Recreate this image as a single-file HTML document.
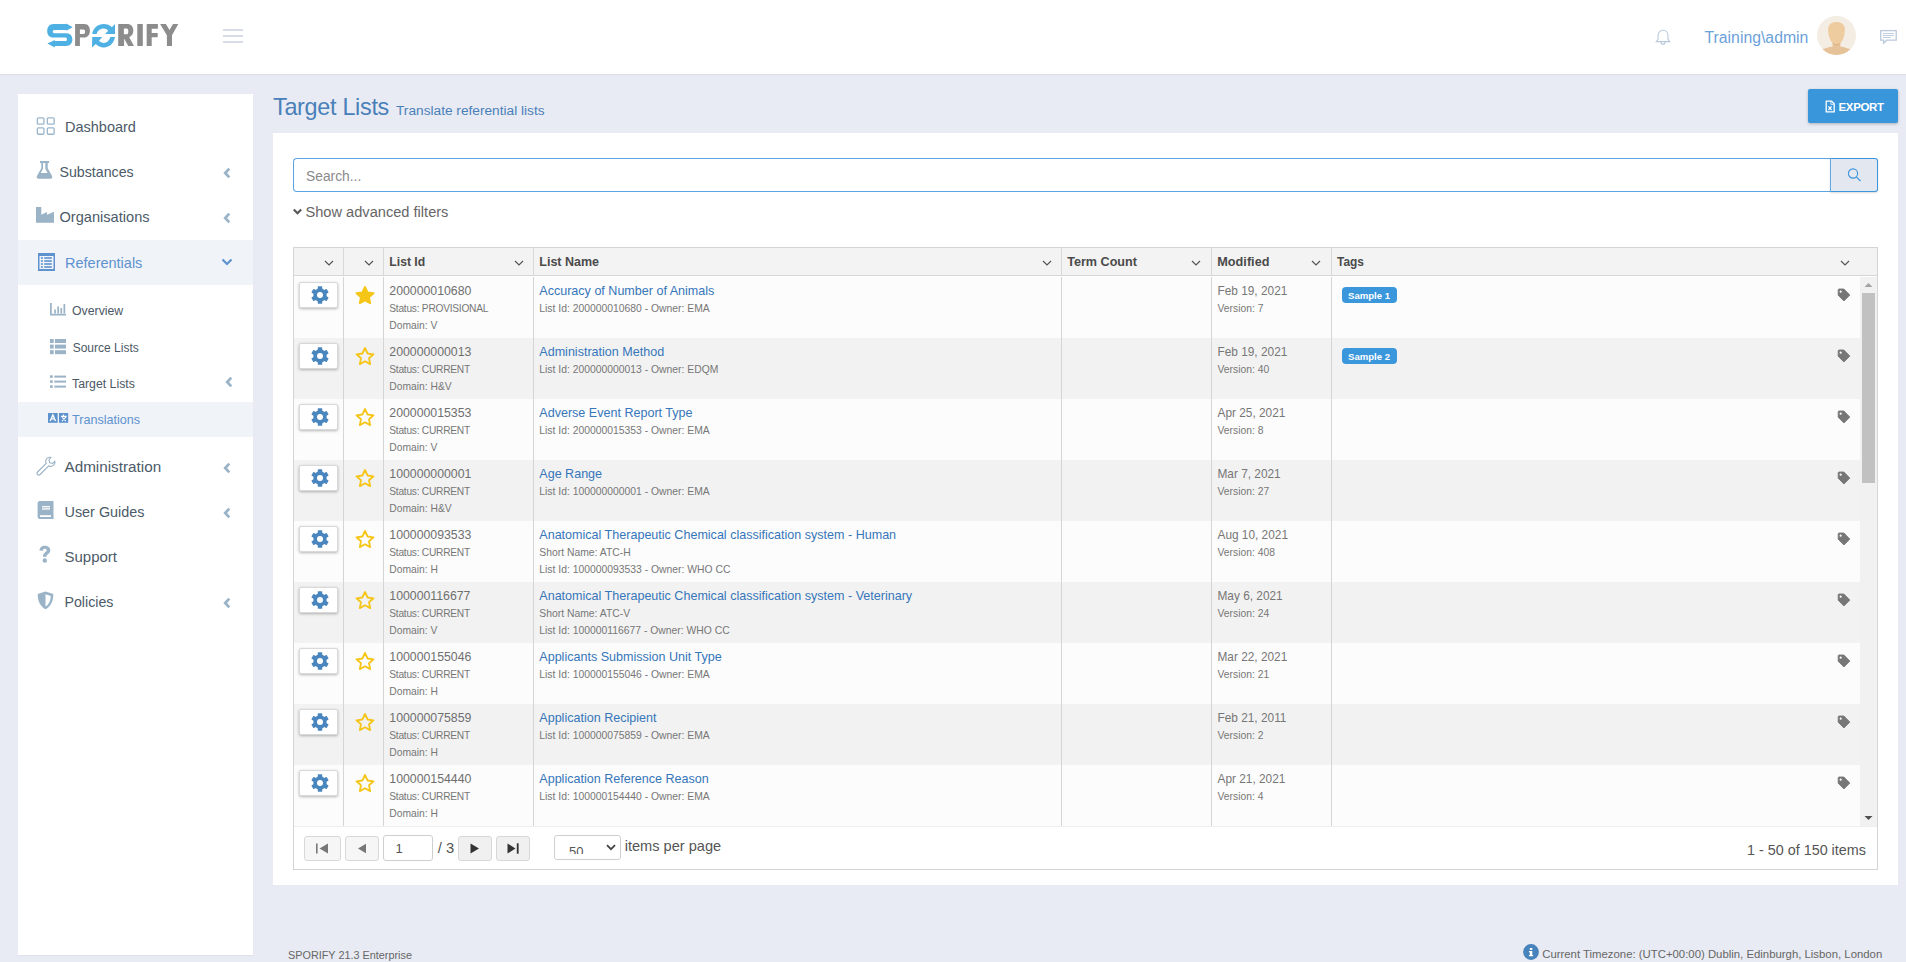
<!DOCTYPE html>
<html><head><meta charset="utf-8"><title>Target Lists</title>
<style>
html,body{margin:0;padding:0;}
body{width:1906px;height:962px;overflow:hidden;position:relative;background:#e8ebf3;font-family:"Liberation Sans", sans-serif;}
.t{position:absolute;line-height:1.117;white-space:nowrap;}
.r{position:absolute;}
</style></head><body>
<div class="r" style="left:0px;top:0px;width:1906px;height:74px;background:#fff;box-shadow:0 1px 1px rgba(0,0,0,0.05)"></div>
<svg class="r" style="left:0px;top:0px;" width="200" height="74" viewBox="0 0 200 74">
<g fill="#4fb0e3">
 <path d="M72.7,27.2 L66.3,30.8 L66.3,30 L54.3,30 C53.3,30 52.8,30.8 52.8,31.6 C52.8,32.5 53.3,33.2 54.5,33.2 L66,33.2 C70.3,33.2 72.4,35.8 72.4,39.5 C72.4,43.3 70,45.9 66,45.9 L54.8,45.9 L54.8,47.5 L47.4,43.5 L54.8,39.9 L54.8,41.1 L65.8,41.1 C66.6,41.1 66.9,40.4 66.9,39.3 C66.9,38.2 66.5,37.5 65.7,37.5 L53.2,37.5 C49.3,37.5 47.2,35 47.2,31 C47.2,26.8 49.5,24 53.6,24 L66.3,24 L66.3,23.6 Z"/>
 <path d="M92.2,33.9 C93.2,28 97.8,24 103.8,24 C107,24 109.8,25.2 111.8,27.2 L115,24 L115,33.9 L105,33.9 L108.2,30.8 C107,29.3 105.5,28.6 103.8,28.6 C100.3,28.6 97.6,30.8 96.6,33.9 Z"/>
 <path d="M115,37.1 C114,43 109.6,47.5 103.8,47.5 C100.6,47.5 97.8,46.2 95.8,44 L92,47.5 L92.2,37.1 L102.2,37.1 L99,40.7 C100.3,42.1 102,42.9 103.8,42.9 C107,42.9 109.4,40.6 110.2,37.1 Z"/>
</g>
<g fill="#8c8c8c" fill-rule="evenodd">
 <path d="M75.1,24 H84.5 C88,24 89.9,26.8 89.9,30.7 C89.9,35 87.5,37.5 84,37.5 H79.9 V46 H75.1 Z M79.9,29.6 V34 H83.4 C84.5,34 85.1,33.2 85.1,31.8 C85.1,30.4 84.5,29.6 83.4,29.6 Z"/>
 <path d="M118.2,24 H127 C131,24 133.3,26.5 133.3,30.8 C133.3,33.8 131.8,36 129.2,37.2 L134,46 H128.2 L124.1,38.6 V46 H118.2 Z M123.9,28.6 V34.2 H126.7 C127.8,34.2 128.3,33.3 128.3,31.4 C128.3,29.5 127.8,28.6 126.7,28.6 Z"/>
 <rect x="137.3" y="24" width="5.5" height="22"/>
 <path d="M146.7,24 H157.9 V28.8 H151.7 V33.1 H157.7 V37.3 H151.7 V46 H146.7 Z"/>
 <path d="M160.1,24 H165.9 L169.5,30.1 L173,24 H178.3 L172,35.3 V46 H166.9 V35.3 Z"/>
</g></svg>
<div class="r" style="left:223px;top:29px;width:20px;height:2px;background:#d6dde8"></div>
<div class="r" style="left:223px;top:35px;width:20px;height:2px;background:#d6dde8"></div>
<div class="r" style="left:223px;top:41px;width:20px;height:2px;background:#d6dde8"></div>
<svg class="r" style="left:1654px;top:28px;" width="18" height="18" viewBox="0 0 18 18"><path d="M9,2.2 C6,2.2 4,4.6 4,7.6 L4,11.5 L2.2,13.6 L15.8,13.6 L14,11.5 L14,7.6 C14,4.6 12,2.2 9,2.2 Z M7,14 C7,15.4 8,16.3 9,16.3 C10,16.3 11,15.4 11,14" fill="none" stroke="#b9c9dc" stroke-width="1.1"/></svg>
<div class="t " style="left:1704.50px;top:29px;line-height:17px;font-size:15.8px;color:#6ca2d9;font-weight:400;">Training\admin</div>
<svg class="r" style="left:1817px;top:16px;" width="40" height="40" viewBox="0 0 40 40"><defs><clipPath id="cc"><circle cx="19.5" cy="19.5" r="19.5"/></clipPath></defs>
<circle cx="19.5" cy="19.5" r="19.5" fill="#f4ede3"/>
<g clip-path="url(#cc)"><path d="M0,35.5 C5,33 11,31.6 15.6,30.6 V25 H23.4 V30.6 C28,31.6 34,33 39,35.5 V40 H0 Z" fill="#e5c297"/>
<path d="M19.5,6 C24.6,6 27.9,8.6 27.9,13.6 C27.9,19.2 26.1,24.4 23.6,26.9 C22.1,28.3 16.9,28.3 15.4,26.9 C12.9,24.4 11.1,19.2 11.1,13.6 C11.1,8.6 14.4,6 19.5,6 Z" fill="#efcc9f"/>
<path d="M15.9,27.6 C17.6,29 21.4,29 23.1,27.6" fill="none" stroke="#d8b182" stroke-width="0.9"/></g></svg>
<svg class="r" style="left:1879px;top:29px;" width="19" height="16" viewBox="0 0 19 16"><path d="M1.7,1.7 H17.2 V11.2 H7.7 L4.6,14.3 V11.2 H1.7 Z" fill="none" stroke="#b9c9dc" stroke-width="1.3"/><path d="M4,4.5 H15 M4,6.5 H15 M4,8.5 H12" stroke="#b9c9dc" stroke-width="0.9"/></svg>
<div class="r" style="left:18px;top:94px;width:235px;height:861px;background:#fff;box-shadow:0 1px 1px rgba(0,0,0,0.03)"></div>
<svg class="r" style="left:36px;top:117px;" width="20" height="19" viewBox="0 0 20 19"><g fill="none" stroke="#9ab6cc" stroke-width="1.3"><rect x="1.35" y="0.85" width="6.6" height="6.3" rx="1"/><rect x="11.35" y="0.85" width="6.8" height="6.3" rx="1"/><rect x="1.35" y="10.85" width="6.6" height="6.4" rx="1"/><rect x="11.35" y="10.85" width="6.8" height="6.4" rx="1"/></g></svg>
<div class="t " style="left:65.00px;top:119px;line-height:16px;font-size:14.5px;color:#4c5a68;font-weight:400;">Dashboard</div>
<svg class="r" style="left:36px;top:161px;" width="17" height="18" viewBox="0 0 17 18"><rect x="4" y="0" width="9" height="2" fill="#9ab3c7"/><path d="M5.3,1.5 H11.7 V7.3 L16.1,15 C16.7,16.3 16,17.7 14.5,17.7 H2.5 C1,17.7 0.3,16.3 0.9,15 L5.3,7.3 Z" fill="#9ab3c7"/><path d="M7,2 H9.3 V7.8 L11.6,11.9 H4.7 L7,7.8 Z" fill="#fff"/></svg>
<div class="t " style="left:59.50px;top:164px;line-height:16px;font-size:14.2px;color:#4c5a68;font-weight:400;">Substances</div>
<svg class="r" style="left:35.5px;top:207px;" width="19" height="17" viewBox="0 0 19 17"><path d="M0,0 H5.3 V7.7 L11,5.1 V7.7 L17.5,5.1 H18 V15.7 H0 Z" fill="#9ab3c7"/></svg>
<div class="t " style="left:59.50px;top:209px;line-height:16px;font-size:14.6px;color:#4c5a68;font-weight:400;">Organisations</div>
<div class="r" style="left:18px;top:240px;width:235px;height:45px;background:#f0f3f8"></div>
<svg class="r" style="left:37.8px;top:253px;" width="17" height="18" viewBox="0 0 17 18"><path fill-rule="evenodd" d="M0,0 H17 V18 H0 Z M1.5,2.9 V16 H15.5 V2.9 Z" fill="#5e92cf"/><g fill="#5e92cf"><rect x="2.9" y="4.2" width="2" height="1.6"/><rect x="6.2" y="4.2" width="7.6" height="1.6"/><rect x="2.9" y="7.2" width="2" height="1.6"/><rect x="6.2" y="7.2" width="7.6" height="1.6"/><rect x="2.9" y="10.2" width="2" height="1.6"/><rect x="6.2" y="10.2" width="7.6" height="1.6"/><rect x="2.9" y="13.2" width="2" height="1.6"/><rect x="6.2" y="13.2" width="7.6" height="1.6"/></g></svg>
<div class="t " style="left:65.00px;top:255px;line-height:16px;font-size:14.5px;color:#5e92cf;font-weight:400;">Referentials</div>
<svg class="r" style="left:50px;top:302.5px;" width="17" height="13" viewBox="0 0 17 13"><path d="M0.9,0 V11.6 H16" fill="none" stroke="#9ab3c7" stroke-width="1.7"/><g fill="#9ab3c7"><rect x="4.2" y="6.5" width="1.7" height="4"/><rect x="7.3" y="3.5" width="1.7" height="7"/><rect x="10.4" y="5" width="1.7" height="5.5"/><rect x="13.5" y="1" width="1.7" height="9.5"/></g></svg>
<div class="t " style="left:72.00px;top:304px;line-height:14px;font-size:12.3px;color:#4c5866;font-weight:400;">Overview</div>
<svg class="r" style="left:50px;top:338.6px;" width="16" height="16" viewBox="0 0 16 16"><g fill="#9ab3c7"><rect x="0" y="0" width="3.7" height="4"/><rect x="5" y="0" width="11" height="4"/><rect x="0" y="5.6" width="3.7" height="4"/><rect x="5" y="5.6" width="11" height="4"/><rect x="0" y="11.2" width="3.7" height="4"/><rect x="5" y="11.2" width="11" height="4"/></g></svg>
<div class="t " style="left:72.70px;top:341px;line-height:14px;font-size:12.0px;color:#4c5866;font-weight:400;">Source Lists</div>
<svg class="r" style="left:50px;top:375.2px;" width="16" height="14" viewBox="0 0 16 14"><g fill="#9ab3c7"><rect x="0" y="0.3" width="2.7" height="2.6"/><rect x="4.3" y="0.6" width="11.7" height="2"/><rect x="0" y="5.3" width="2.7" height="2.6"/><rect x="4.3" y="5.6" width="11.7" height="2"/><rect x="0" y="10.3" width="2.7" height="2.6"/><rect x="4.3" y="10.6" width="11.7" height="2"/></g></svg>
<div class="t " style="left:72.00px;top:377px;line-height:14px;font-size:12.3px;color:#4c5866;font-weight:400;">Target Lists</div>
<div class="r" style="left:18px;top:402px;width:235px;height:35px;background:#f0f3f8"></div>
<svg class="r" style="left:48px;top:413px;" width="21" height="11" viewBox="0 0 21 11"><rect x="0" y="0" width="9.7" height="9.8" fill="#5e92cf"/><rect x="11" y="0" width="9.2" height="9.8" fill="#5e92cf"/><path d="M2.2,8 L4.85,1.9 L7.5,8 M3.2,5.9 H6.5" fill="none" stroke="#fff" stroke-width="1.3"/><path d="M15.4,1.5 V2.8 M13,3.4 H18.6 M14.2,4.4 L17.8,8 M18.3,3.6 L14,8.2" fill="none" stroke="#fff" stroke-width="1.1"/></svg>
<div class="t " style="left:72.00px;top:413px;line-height:14px;font-size:12.6px;color:#5e92cf;font-weight:400;">Translations</div>
<svg class="r" style="left:222px;top:167px;" width="10" height="12" viewBox="0 0 10 12"><path d="M7.3,1.6 L3.2,6 L7.3,10.4" fill="none" stroke="#9ab3c7" stroke-width="2.7"/></svg>
<svg class="r" style="left:222px;top:212px;" width="10" height="12" viewBox="0 0 10 12"><path d="M7.3,1.6 L3.2,6 L7.3,10.4" fill="none" stroke="#9ab3c7" stroke-width="2.7"/></svg>
<svg class="r" style="left:222px;top:462px;" width="10" height="12" viewBox="0 0 10 12"><path d="M7.3,1.6 L3.2,6 L7.3,10.4" fill="none" stroke="#9ab3c7" stroke-width="2.7"/></svg>
<svg class="r" style="left:222px;top:507px;" width="10" height="12" viewBox="0 0 10 12"><path d="M7.3,1.6 L3.2,6 L7.3,10.4" fill="none" stroke="#9ab3c7" stroke-width="2.7"/></svg>
<svg class="r" style="left:222px;top:597px;" width="10" height="12" viewBox="0 0 10 12"><path d="M7.3,1.6 L3.2,6 L7.3,10.4" fill="none" stroke="#9ab3c7" stroke-width="2.7"/></svg>
<svg class="r" style="left:224px;top:376px;" width="10" height="12" viewBox="0 0 10 12"><path d="M7.3,1.6 L3.2,6 L7.3,10.4" fill="none" stroke="#9ab3c7" stroke-width="2.7"/></svg>
<svg class="r" style="left:220px;top:257px;" width="14" height="10" viewBox="0 0 14 10"><path d="M2.5,2.5 L7,7 L11.5,2.5" fill="none" stroke="#5e92cf" stroke-width="2.2"/></svg>
<svg class="r" style="left:36px;top:456px;" width="20" height="20" viewBox="0 0 20 20"><path d="M14.8,1.3 C12.5,0.8 10.2,2.2 9.8,4.6 C9.6,5.6 9.8,6.6 10.2,7.4 L1.6,16 C0.9,16.7 0.9,17.8 1.6,18.5 C2.3,19.2 3.4,19.2 4.1,18.5 L12.7,9.9 C13.5,10.3 14.5,10.5 15.5,10.3 C17.9,9.9 19.3,7.6 18.8,5.3 L16.6,7.5 L13.8,6.8 L13,4 Z" fill="none" stroke="#9ab3c7" stroke-width="1.1"/></svg>
<div class="t " style="left:64.50px;top:458px;line-height:17px;font-size:15.25px;color:#4c5a68;font-weight:400;">Administration</div>
<svg class="r" style="left:37px;top:501px;" width="17" height="18" viewBox="0 0 17 18"><path d="M2.6,0 H16.5 V18 H2.6 C1.3,18 0.6,17 0.6,15.5 V2.5 C0.6,1 1.3,0 2.6,0 Z" fill="#9ab3c7"/><rect x="5" y="5.1" width="8" height="1.3" fill="#fff"/><rect x="5" y="7.3" width="8" height="1.3" fill="#fff"/><rect x="3" y="14.2" width="11" height="1.8" fill="#fff"/></svg>
<div class="t " style="left:64.50px;top:504px;line-height:16px;font-size:14.4px;color:#4c5a68;font-weight:400;">User Guides</div>
<svg class="r" style="left:38px;top:545px;" width="14" height="19" viewBox="0 0 14 19"><path d="M1.5,5.5 C1.5,2.5 3.8,0.8 6.8,0.8 C9.8,0.8 12.3,2.5 12.3,5.3 C12.3,7.6 10.8,8.6 9.5,9.5 C8.7,10 8.5,10.6 8.5,11.8 H5 C5,9.8 5.5,8.5 7.2,7.3 C8.3,6.5 8.7,6 8.7,5.3 C8.7,4.3 8,3.8 6.8,3.8 C5.6,3.8 4.9,4.5 4.9,5.8 Z" fill="#9ab3c7"/><circle cx="6.8" cy="15.5" r="2.2" fill="#9ab3c7"/></svg>
<div class="t " style="left:64.50px;top:548px;line-height:17px;font-size:15px;color:#4c5a68;font-weight:400;">Support</div>
<svg class="r" style="left:37px;top:591px;" width="17" height="19" viewBox="0 0 17 19"><path d="M8.5,0.5 L16.3,3 C16.3,10.5 13.5,15.5 8.5,18.3 C3.5,15.5 0.7,10.5 0.7,3 Z" fill="#9ab3c7"/><path d="M8.5,3.2 L13.8,4.9 C13.6,10 11.6,13.7 8.5,15.6 Z" fill="#fff"/></svg>
<div class="t " style="left:64.50px;top:594px;line-height:16px;font-size:14.2px;color:#4c5a68;font-weight:400;">Policies</div>
<div class="t " style="left:273.00px;top:94px;line-height:26px;font-size:23.4px;color:#4a80b9;font-weight:400;letter-spacing:-0.3px">Target Lists</div>
<div class="t " style="left:396.00px;top:103px;line-height:15px;font-size:13.7px;color:#4a80b9;font-weight:400;">Translate referential lists</div>
<div class="r" style="left:1808px;top:89px;width:90px;height:34px;background:#3a96db;border-radius:2px;box-shadow:0 1px 3px rgba(0,0,0,0.25)"></div>
<svg class="r" style="left:1825px;top:100px;" width="11" height="13" viewBox="0 0 11 13"><path d="M1.2,1.1 H6.6 L9.2,3.8 V11.9 H1.2 Z" fill="none" stroke="#fff" stroke-width="1.3" stroke-linejoin="round"/><path d="M5.9,1.2 V4.3 H9" fill="none" stroke="#fff" stroke-width="0.8"/><path d="M3.4,6.3 L6.6,10 M6.6,6.3 L3.4,10" stroke="#fff" stroke-width="1.2"/></svg>
<div class="t " style="left:1838.50px;top:101px;line-height:12px;font-size:11.5px;color:#fff;font-weight:700;letter-spacing:-0.35px">EXPORT</div>
<div class="r" style="left:273px;top:133px;width:1625px;height:752px;background:#fff"></div>
<div class="r" style="left:293px;top:158px;width:1537px;height:34px;box-sizing:border-box;border:1px solid #5ba3e3;border-right:none;border-radius:4px 0 0 4px;background:#fff"></div>
<div class="t " style="left:306.00px;top:169px;line-height:15px;font-size:13.8px;color:#8a8a8a;font-weight:400;">Search...</div>
<div class="r" style="left:1830px;top:158px;width:48px;height:34px;box-sizing:border-box;border:1px solid #3b95dc;border-left-color:#62a8e6;border-radius:0 3px 3px 0;background:#e3e7ef;box-shadow:0 1px 2px rgba(0,0,0,0.15)"></div>
<svg class="r" style="left:1846px;top:166px;" width="16" height="16" viewBox="0 0 16 16"><circle cx="7" cy="7.5" r="4.6" fill="none" stroke="#3b95dc" stroke-width="1.1"/><path d="M10.3,10.8 L14.5,15" stroke="#3b95dc" stroke-width="1.1"/></svg>
<svg class="r" style="left:292px;top:208px;" width="11" height="8" viewBox="0 0 11 8"><path d="M1.8,1.5 L5.5,5.2 L9.2,1.5" fill="none" stroke="#555" stroke-width="2.1"/></svg>
<div class="t " style="left:305.50px;top:204px;line-height:16px;font-size:14.62px;color:#666;font-weight:400;">Show advanced filters</div>
<div class="r" style="left:293px;top:247px;width:1585px;height:623px;box-sizing:border-box;border:1px solid #d5d5d5;background:#fff"></div>
<div class="r" style="left:294px;top:248px;width:1583px;height:28px;box-sizing:border-box;background:#f3f3f3;border-bottom:1px solid #d5d5d5"></div>
<div class="r" style="left:294px;top:276px;width:1583px;height:1px;background:#fff"></div>
<div class="r" style="left:343px;top:248px;width:1px;height:27px;background:#d8d8d8"></div>
<div class="r" style="left:383px;top:248px;width:1px;height:27px;background:#d8d8d8"></div>
<div class="r" style="left:533px;top:248px;width:1px;height:27px;background:#d8d8d8"></div>
<div class="r" style="left:1061px;top:248px;width:1px;height:27px;background:#d8d8d8"></div>
<div class="r" style="left:1211px;top:248px;width:1px;height:27px;background:#d8d8d8"></div>
<div class="r" style="left:1331px;top:248px;width:1px;height:27px;background:#d8d8d8"></div>
<svg class="r" style="left:324px;top:260px;" width="10" height="6" viewBox="0 0 10 6"><path d="M1,1 L5,5 L9,1" fill="none" stroke="#555" stroke-width="1.2"/></svg>
<svg class="r" style="left:364px;top:260px;" width="10" height="6" viewBox="0 0 10 6"><path d="M1,1 L5,5 L9,1" fill="none" stroke="#555" stroke-width="1.2"/></svg>
<svg class="r" style="left:514px;top:260px;" width="10" height="6" viewBox="0 0 10 6"><path d="M1,1 L5,5 L9,1" fill="none" stroke="#555" stroke-width="1.2"/></svg>
<svg class="r" style="left:1042px;top:260px;" width="10" height="6" viewBox="0 0 10 6"><path d="M1,1 L5,5 L9,1" fill="none" stroke="#555" stroke-width="1.2"/></svg>
<svg class="r" style="left:1191px;top:260px;" width="10" height="6" viewBox="0 0 10 6"><path d="M1,1 L5,5 L9,1" fill="none" stroke="#555" stroke-width="1.2"/></svg>
<svg class="r" style="left:1311px;top:260px;" width="10" height="6" viewBox="0 0 10 6"><path d="M1,1 L5,5 L9,1" fill="none" stroke="#555" stroke-width="1.2"/></svg>
<svg class="r" style="left:1840px;top:260px;" width="10" height="6" viewBox="0 0 10 6"><path d="M1,1 L5,5 L9,1" fill="none" stroke="#555" stroke-width="1.2"/></svg>
<div class="t " style="left:389.30px;top:255px;line-height:14px;font-size:12.2px;color:#4a4a4a;font-weight:700;">List Id</div>
<div class="t " style="left:539.30px;top:255px;line-height:14px;font-size:12.5px;color:#4a4a4a;font-weight:700;">List Name</div>
<div class="t " style="left:1067.20px;top:255px;line-height:14px;font-size:12.6px;color:#4a4a4a;font-weight:700;">Term Count</div>
<div class="t " style="left:1217.30px;top:255px;line-height:14px;font-size:12.7px;color:#4a4a4a;font-weight:700;">Modified</div>
<div class="t " style="left:1337.00px;top:255px;line-height:14px;font-size:11.9px;color:#4a4a4a;font-weight:700;">Tags</div>
<div class="r" style="left:294px;top:277px;width:1566px;height:61px;background:#fcfcfc"></div>
<div class="r" style="left:299px;top:282px;width:39px;height:26px;box-sizing:border-box;background:#fff;border:1px solid #d9d9d9;border-radius:2px;box-shadow:0 1px 3px rgba(0,0,0,0.28)"></div>
<svg class="r" style="left:310px;top:285.2px;" width="20" height="20" viewBox="0 0 20 20"><g fill="#4a86be"><circle cx="10" cy="10" r="6.7"/><rect x="7.8" y="1.2" width="4.4" height="5" rx="0.6" transform="rotate(0 10 10)"/><rect x="7.8" y="1.2" width="4.4" height="5" rx="0.6" transform="rotate(60 10 10)"/><rect x="7.8" y="1.2" width="4.4" height="5" rx="0.6" transform="rotate(120 10 10)"/><rect x="7.8" y="1.2" width="4.4" height="5" rx="0.6" transform="rotate(180 10 10)"/><rect x="7.8" y="1.2" width="4.4" height="5" rx="0.6" transform="rotate(240 10 10)"/><rect x="7.8" y="1.2" width="4.4" height="5" rx="0.6" transform="rotate(300 10 10)"/></g><circle cx="10" cy="10" r="3" fill="#fff"/></svg>
<svg class="r" style="left:355px;top:285px;" width="20" height="19" viewBox="0 0 20 19"><path d="M10,2 L12.6,7.5 L18.5,8.3 L14,12.2 L15.2,18.1 L10,15.3 L4.8,18.1 L6,12.2 L1.5,8.3 L7.4,7.5 Z" fill="#f5c518" stroke="#f5c518" stroke-width="1.9" stroke-linejoin="round"/></svg>
<div class="r" style="left:383px;top:297px;width:1px;height:2px;background:#999"></div>
<div class="t " style="left:389.30px;top:284px;line-height:14px;font-size:12.3px;color:#6f6f6f;font-weight:400;">200000010680</div>
<div class="t " style="left:389.30px;top:303px;line-height:11px;font-size:10.2px;color:#777;font-weight:400;letter-spacing:-0.25px">Status: PROVISIONAL</div>
<div class="t " style="left:389.30px;top:320px;line-height:11px;font-size:10.3px;color:#777;font-weight:400;">Domain: V</div>
<div class="t " style="left:539.30px;top:284px;line-height:14px;font-size:12.55px;color:#3676ba;font-weight:400;">Accuracy of Number of Animals</div>
<div class="t " style="left:539.30px;top:303px;line-height:11px;font-size:10.36px;color:#777;font-weight:400;">List Id: 200000010680 - Owner: EMA</div>
<div class="t " style="left:1217.50px;top:284px;line-height:14px;font-size:11.85px;color:#777;font-weight:400;">Feb 19, 2021</div>
<div class="t " style="left:1217.50px;top:303px;line-height:11px;font-size:10.34px;color:#777;font-weight:400;">Version: 7</div>
<div class="r" style="left:1342px;top:287px;width:55px;height:16px;background:#3a97dc;border-radius:4px"></div>
<div class="t " style="left:1348.00px;top:290px;line-height:11px;font-size:9.57px;color:#fff;font-weight:700;">Sample 1</div>
<svg class="r" style="left:1837px;top:288px;" width="14" height="14" viewBox="0 0 14 14"><path d="M1.2,1.9 C1.2,1.4 1.6,1 2.1,1 H6.9 L12.8,7.1 L6.9,13 L1.2,7.2 Z" fill="#777" stroke="#777" stroke-width="0.9" stroke-linejoin="round"/><circle cx="3.7" cy="3.7" r="1.1" fill="#fcfcfc"/></svg>
<div class="r" style="left:294px;top:338px;width:1566px;height:61px;background:#f2f2f2"></div>
<div class="r" style="left:299px;top:343px;width:39px;height:26px;box-sizing:border-box;background:#fff;border:1px solid #d9d9d9;border-radius:2px;box-shadow:0 1px 3px rgba(0,0,0,0.28)"></div>
<svg class="r" style="left:310px;top:346.2px;" width="20" height="20" viewBox="0 0 20 20"><g fill="#4a86be"><circle cx="10" cy="10" r="6.7"/><rect x="7.8" y="1.2" width="4.4" height="5" rx="0.6" transform="rotate(0 10 10)"/><rect x="7.8" y="1.2" width="4.4" height="5" rx="0.6" transform="rotate(60 10 10)"/><rect x="7.8" y="1.2" width="4.4" height="5" rx="0.6" transform="rotate(120 10 10)"/><rect x="7.8" y="1.2" width="4.4" height="5" rx="0.6" transform="rotate(180 10 10)"/><rect x="7.8" y="1.2" width="4.4" height="5" rx="0.6" transform="rotate(240 10 10)"/><rect x="7.8" y="1.2" width="4.4" height="5" rx="0.6" transform="rotate(300 10 10)"/></g><circle cx="10" cy="10" r="3" fill="#fff"/></svg>
<svg class="r" style="left:355px;top:346px;" width="20" height="19" viewBox="0 0 20 19"><path d="M10,2 L12.6,7.5 L18.5,8.3 L14,12.2 L15.2,18.1 L10,15.3 L4.8,18.1 L6,12.2 L1.5,8.3 L7.4,7.5 Z" fill="none" stroke="#f5c518" stroke-width="1.8" stroke-linejoin="round"/></svg>
<div class="r" style="left:383px;top:358px;width:1px;height:2px;background:#999"></div>
<div class="t " style="left:389.30px;top:345px;line-height:14px;font-size:12.3px;color:#6f6f6f;font-weight:400;">200000000013</div>
<div class="t " style="left:389.30px;top:364px;line-height:11px;font-size:10.2px;color:#777;font-weight:400;letter-spacing:-0.25px">Status: CURRENT</div>
<div class="t " style="left:389.30px;top:381px;line-height:11px;font-size:10.3px;color:#777;font-weight:400;">Domain: H&amp;V</div>
<div class="t " style="left:539.30px;top:345px;line-height:14px;font-size:12.55px;color:#3676ba;font-weight:400;">Administration Method</div>
<div class="t " style="left:539.30px;top:364px;line-height:11px;font-size:10.36px;color:#777;font-weight:400;">List Id: 200000000013 - Owner: EDQM</div>
<div class="t " style="left:1217.50px;top:345px;line-height:14px;font-size:11.85px;color:#777;font-weight:400;">Feb 19, 2021</div>
<div class="t " style="left:1217.50px;top:364px;line-height:11px;font-size:10.34px;color:#777;font-weight:400;">Version: 40</div>
<div class="r" style="left:1342px;top:348px;width:55px;height:16px;background:#3a97dc;border-radius:4px"></div>
<div class="t " style="left:1348.00px;top:351px;line-height:11px;font-size:9.57px;color:#fff;font-weight:700;">Sample 2</div>
<svg class="r" style="left:1837px;top:349px;" width="14" height="14" viewBox="0 0 14 14"><path d="M1.2,1.9 C1.2,1.4 1.6,1 2.1,1 H6.9 L12.8,7.1 L6.9,13 L1.2,7.2 Z" fill="#777" stroke="#777" stroke-width="0.9" stroke-linejoin="round"/><circle cx="3.7" cy="3.7" r="1.1" fill="#fcfcfc"/></svg>
<div class="r" style="left:294px;top:399px;width:1566px;height:61px;background:#fcfcfc"></div>
<div class="r" style="left:299px;top:404px;width:39px;height:26px;box-sizing:border-box;background:#fff;border:1px solid #d9d9d9;border-radius:2px;box-shadow:0 1px 3px rgba(0,0,0,0.28)"></div>
<svg class="r" style="left:310px;top:407.2px;" width="20" height="20" viewBox="0 0 20 20"><g fill="#4a86be"><circle cx="10" cy="10" r="6.7"/><rect x="7.8" y="1.2" width="4.4" height="5" rx="0.6" transform="rotate(0 10 10)"/><rect x="7.8" y="1.2" width="4.4" height="5" rx="0.6" transform="rotate(60 10 10)"/><rect x="7.8" y="1.2" width="4.4" height="5" rx="0.6" transform="rotate(120 10 10)"/><rect x="7.8" y="1.2" width="4.4" height="5" rx="0.6" transform="rotate(180 10 10)"/><rect x="7.8" y="1.2" width="4.4" height="5" rx="0.6" transform="rotate(240 10 10)"/><rect x="7.8" y="1.2" width="4.4" height="5" rx="0.6" transform="rotate(300 10 10)"/></g><circle cx="10" cy="10" r="3" fill="#fff"/></svg>
<svg class="r" style="left:355px;top:407px;" width="20" height="19" viewBox="0 0 20 19"><path d="M10,2 L12.6,7.5 L18.5,8.3 L14,12.2 L15.2,18.1 L10,15.3 L4.8,18.1 L6,12.2 L1.5,8.3 L7.4,7.5 Z" fill="none" stroke="#f5c518" stroke-width="1.8" stroke-linejoin="round"/></svg>
<div class="r" style="left:383px;top:419px;width:1px;height:2px;background:#999"></div>
<div class="t " style="left:389.30px;top:406px;line-height:14px;font-size:12.3px;color:#6f6f6f;font-weight:400;">200000015353</div>
<div class="t " style="left:389.30px;top:425px;line-height:11px;font-size:10.2px;color:#777;font-weight:400;letter-spacing:-0.25px">Status: CURRENT</div>
<div class="t " style="left:389.30px;top:442px;line-height:11px;font-size:10.3px;color:#777;font-weight:400;">Domain: V</div>
<div class="t " style="left:539.30px;top:406px;line-height:14px;font-size:12.55px;color:#3676ba;font-weight:400;">Adverse Event Report Type</div>
<div class="t " style="left:539.30px;top:425px;line-height:11px;font-size:10.36px;color:#777;font-weight:400;">List Id: 200000015353 - Owner: EMA</div>
<div class="t " style="left:1217.50px;top:406px;line-height:14px;font-size:11.85px;color:#777;font-weight:400;">Apr 25, 2021</div>
<div class="t " style="left:1217.50px;top:425px;line-height:11px;font-size:10.34px;color:#777;font-weight:400;">Version: 8</div>
<svg class="r" style="left:1837px;top:410px;" width="14" height="14" viewBox="0 0 14 14"><path d="M1.2,1.9 C1.2,1.4 1.6,1 2.1,1 H6.9 L12.8,7.1 L6.9,13 L1.2,7.2 Z" fill="#777" stroke="#777" stroke-width="0.9" stroke-linejoin="round"/><circle cx="3.7" cy="3.7" r="1.1" fill="#fcfcfc"/></svg>
<div class="r" style="left:294px;top:460px;width:1566px;height:61px;background:#f2f2f2"></div>
<div class="r" style="left:299px;top:465px;width:39px;height:26px;box-sizing:border-box;background:#fff;border:1px solid #d9d9d9;border-radius:2px;box-shadow:0 1px 3px rgba(0,0,0,0.28)"></div>
<svg class="r" style="left:310px;top:468.2px;" width="20" height="20" viewBox="0 0 20 20"><g fill="#4a86be"><circle cx="10" cy="10" r="6.7"/><rect x="7.8" y="1.2" width="4.4" height="5" rx="0.6" transform="rotate(0 10 10)"/><rect x="7.8" y="1.2" width="4.4" height="5" rx="0.6" transform="rotate(60 10 10)"/><rect x="7.8" y="1.2" width="4.4" height="5" rx="0.6" transform="rotate(120 10 10)"/><rect x="7.8" y="1.2" width="4.4" height="5" rx="0.6" transform="rotate(180 10 10)"/><rect x="7.8" y="1.2" width="4.4" height="5" rx="0.6" transform="rotate(240 10 10)"/><rect x="7.8" y="1.2" width="4.4" height="5" rx="0.6" transform="rotate(300 10 10)"/></g><circle cx="10" cy="10" r="3" fill="#fff"/></svg>
<svg class="r" style="left:355px;top:468px;" width="20" height="19" viewBox="0 0 20 19"><path d="M10,2 L12.6,7.5 L18.5,8.3 L14,12.2 L15.2,18.1 L10,15.3 L4.8,18.1 L6,12.2 L1.5,8.3 L7.4,7.5 Z" fill="none" stroke="#f5c518" stroke-width="1.8" stroke-linejoin="round"/></svg>
<div class="r" style="left:383px;top:480px;width:1px;height:2px;background:#999"></div>
<div class="t " style="left:389.30px;top:467px;line-height:14px;font-size:12.3px;color:#6f6f6f;font-weight:400;">100000000001</div>
<div class="t " style="left:389.30px;top:486px;line-height:11px;font-size:10.2px;color:#777;font-weight:400;letter-spacing:-0.25px">Status: CURRENT</div>
<div class="t " style="left:389.30px;top:503px;line-height:11px;font-size:10.3px;color:#777;font-weight:400;">Domain: H&amp;V</div>
<div class="t " style="left:539.30px;top:467px;line-height:14px;font-size:12.55px;color:#3676ba;font-weight:400;">Age Range</div>
<div class="t " style="left:539.30px;top:486px;line-height:11px;font-size:10.36px;color:#777;font-weight:400;">List Id: 100000000001 - Owner: EMA</div>
<div class="t " style="left:1217.50px;top:467px;line-height:14px;font-size:11.85px;color:#777;font-weight:400;">Mar 7, 2021</div>
<div class="t " style="left:1217.50px;top:486px;line-height:11px;font-size:10.34px;color:#777;font-weight:400;">Version: 27</div>
<svg class="r" style="left:1837px;top:471px;" width="14" height="14" viewBox="0 0 14 14"><path d="M1.2,1.9 C1.2,1.4 1.6,1 2.1,1 H6.9 L12.8,7.1 L6.9,13 L1.2,7.2 Z" fill="#777" stroke="#777" stroke-width="0.9" stroke-linejoin="round"/><circle cx="3.7" cy="3.7" r="1.1" fill="#fcfcfc"/></svg>
<div class="r" style="left:294px;top:521px;width:1566px;height:61px;background:#fcfcfc"></div>
<div class="r" style="left:299px;top:526px;width:39px;height:26px;box-sizing:border-box;background:#fff;border:1px solid #d9d9d9;border-radius:2px;box-shadow:0 1px 3px rgba(0,0,0,0.28)"></div>
<svg class="r" style="left:310px;top:529.2px;" width="20" height="20" viewBox="0 0 20 20"><g fill="#4a86be"><circle cx="10" cy="10" r="6.7"/><rect x="7.8" y="1.2" width="4.4" height="5" rx="0.6" transform="rotate(0 10 10)"/><rect x="7.8" y="1.2" width="4.4" height="5" rx="0.6" transform="rotate(60 10 10)"/><rect x="7.8" y="1.2" width="4.4" height="5" rx="0.6" transform="rotate(120 10 10)"/><rect x="7.8" y="1.2" width="4.4" height="5" rx="0.6" transform="rotate(180 10 10)"/><rect x="7.8" y="1.2" width="4.4" height="5" rx="0.6" transform="rotate(240 10 10)"/><rect x="7.8" y="1.2" width="4.4" height="5" rx="0.6" transform="rotate(300 10 10)"/></g><circle cx="10" cy="10" r="3" fill="#fff"/></svg>
<svg class="r" style="left:355px;top:529px;" width="20" height="19" viewBox="0 0 20 19"><path d="M10,2 L12.6,7.5 L18.5,8.3 L14,12.2 L15.2,18.1 L10,15.3 L4.8,18.1 L6,12.2 L1.5,8.3 L7.4,7.5 Z" fill="none" stroke="#f5c518" stroke-width="1.8" stroke-linejoin="round"/></svg>
<div class="r" style="left:383px;top:541px;width:1px;height:2px;background:#999"></div>
<div class="t " style="left:389.30px;top:528px;line-height:14px;font-size:12.3px;color:#6f6f6f;font-weight:400;">100000093533</div>
<div class="t " style="left:389.30px;top:547px;line-height:11px;font-size:10.2px;color:#777;font-weight:400;letter-spacing:-0.25px">Status: CURRENT</div>
<div class="t " style="left:389.30px;top:564px;line-height:11px;font-size:10.3px;color:#777;font-weight:400;">Domain: H</div>
<div class="t " style="left:539.30px;top:528px;line-height:14px;font-size:12.55px;color:#3676ba;font-weight:400;">Anatomical Therapeutic Chemical classification system - Human</div>
<div class="t " style="left:539.30px;top:547px;line-height:11px;font-size:10.36px;color:#777;font-weight:400;">Short Name: ATC-H</div>
<div class="t " style="left:539.30px;top:564px;line-height:11px;font-size:10.36px;color:#777;font-weight:400;">List Id: 100000093533 - Owner: WHO CC</div>
<div class="t " style="left:1217.50px;top:528px;line-height:14px;font-size:11.85px;color:#777;font-weight:400;">Aug 10, 2021</div>
<div class="t " style="left:1217.50px;top:547px;line-height:11px;font-size:10.34px;color:#777;font-weight:400;">Version: 408</div>
<svg class="r" style="left:1837px;top:532px;" width="14" height="14" viewBox="0 0 14 14"><path d="M1.2,1.9 C1.2,1.4 1.6,1 2.1,1 H6.9 L12.8,7.1 L6.9,13 L1.2,7.2 Z" fill="#777" stroke="#777" stroke-width="0.9" stroke-linejoin="round"/><circle cx="3.7" cy="3.7" r="1.1" fill="#fcfcfc"/></svg>
<div class="r" style="left:294px;top:582px;width:1566px;height:61px;background:#f2f2f2"></div>
<div class="r" style="left:299px;top:587px;width:39px;height:26px;box-sizing:border-box;background:#fff;border:1px solid #d9d9d9;border-radius:2px;box-shadow:0 1px 3px rgba(0,0,0,0.28)"></div>
<svg class="r" style="left:310px;top:590.2px;" width="20" height="20" viewBox="0 0 20 20"><g fill="#4a86be"><circle cx="10" cy="10" r="6.7"/><rect x="7.8" y="1.2" width="4.4" height="5" rx="0.6" transform="rotate(0 10 10)"/><rect x="7.8" y="1.2" width="4.4" height="5" rx="0.6" transform="rotate(60 10 10)"/><rect x="7.8" y="1.2" width="4.4" height="5" rx="0.6" transform="rotate(120 10 10)"/><rect x="7.8" y="1.2" width="4.4" height="5" rx="0.6" transform="rotate(180 10 10)"/><rect x="7.8" y="1.2" width="4.4" height="5" rx="0.6" transform="rotate(240 10 10)"/><rect x="7.8" y="1.2" width="4.4" height="5" rx="0.6" transform="rotate(300 10 10)"/></g><circle cx="10" cy="10" r="3" fill="#fff"/></svg>
<svg class="r" style="left:355px;top:590px;" width="20" height="19" viewBox="0 0 20 19"><path d="M10,2 L12.6,7.5 L18.5,8.3 L14,12.2 L15.2,18.1 L10,15.3 L4.8,18.1 L6,12.2 L1.5,8.3 L7.4,7.5 Z" fill="none" stroke="#f5c518" stroke-width="1.8" stroke-linejoin="round"/></svg>
<div class="r" style="left:383px;top:602px;width:1px;height:2px;background:#999"></div>
<div class="t " style="left:389.30px;top:589px;line-height:14px;font-size:12.3px;color:#6f6f6f;font-weight:400;">100000116677</div>
<div class="t " style="left:389.30px;top:608px;line-height:11px;font-size:10.2px;color:#777;font-weight:400;letter-spacing:-0.25px">Status: CURRENT</div>
<div class="t " style="left:389.30px;top:625px;line-height:11px;font-size:10.3px;color:#777;font-weight:400;">Domain: V</div>
<div class="t " style="left:539.30px;top:589px;line-height:14px;font-size:12.55px;color:#3676ba;font-weight:400;">Anatomical Therapeutic Chemical classification system - Veterinary</div>
<div class="t " style="left:539.30px;top:608px;line-height:11px;font-size:10.36px;color:#777;font-weight:400;">Short Name: ATC-V</div>
<div class="t " style="left:539.30px;top:625px;line-height:11px;font-size:10.36px;color:#777;font-weight:400;">List Id: 100000116677 - Owner: WHO CC</div>
<div class="t " style="left:1217.50px;top:589px;line-height:14px;font-size:11.85px;color:#777;font-weight:400;">May 6, 2021</div>
<div class="t " style="left:1217.50px;top:608px;line-height:11px;font-size:10.34px;color:#777;font-weight:400;">Version: 24</div>
<svg class="r" style="left:1837px;top:593px;" width="14" height="14" viewBox="0 0 14 14"><path d="M1.2,1.9 C1.2,1.4 1.6,1 2.1,1 H6.9 L12.8,7.1 L6.9,13 L1.2,7.2 Z" fill="#777" stroke="#777" stroke-width="0.9" stroke-linejoin="round"/><circle cx="3.7" cy="3.7" r="1.1" fill="#fcfcfc"/></svg>
<div class="r" style="left:294px;top:643px;width:1566px;height:61px;background:#fcfcfc"></div>
<div class="r" style="left:299px;top:648px;width:39px;height:26px;box-sizing:border-box;background:#fff;border:1px solid #d9d9d9;border-radius:2px;box-shadow:0 1px 3px rgba(0,0,0,0.28)"></div>
<svg class="r" style="left:310px;top:651.2px;" width="20" height="20" viewBox="0 0 20 20"><g fill="#4a86be"><circle cx="10" cy="10" r="6.7"/><rect x="7.8" y="1.2" width="4.4" height="5" rx="0.6" transform="rotate(0 10 10)"/><rect x="7.8" y="1.2" width="4.4" height="5" rx="0.6" transform="rotate(60 10 10)"/><rect x="7.8" y="1.2" width="4.4" height="5" rx="0.6" transform="rotate(120 10 10)"/><rect x="7.8" y="1.2" width="4.4" height="5" rx="0.6" transform="rotate(180 10 10)"/><rect x="7.8" y="1.2" width="4.4" height="5" rx="0.6" transform="rotate(240 10 10)"/><rect x="7.8" y="1.2" width="4.4" height="5" rx="0.6" transform="rotate(300 10 10)"/></g><circle cx="10" cy="10" r="3" fill="#fff"/></svg>
<svg class="r" style="left:355px;top:651px;" width="20" height="19" viewBox="0 0 20 19"><path d="M10,2 L12.6,7.5 L18.5,8.3 L14,12.2 L15.2,18.1 L10,15.3 L4.8,18.1 L6,12.2 L1.5,8.3 L7.4,7.5 Z" fill="none" stroke="#f5c518" stroke-width="1.8" stroke-linejoin="round"/></svg>
<div class="r" style="left:383px;top:663px;width:1px;height:2px;background:#999"></div>
<div class="t " style="left:389.30px;top:650px;line-height:14px;font-size:12.3px;color:#6f6f6f;font-weight:400;">100000155046</div>
<div class="t " style="left:389.30px;top:669px;line-height:11px;font-size:10.2px;color:#777;font-weight:400;letter-spacing:-0.25px">Status: CURRENT</div>
<div class="t " style="left:389.30px;top:686px;line-height:11px;font-size:10.3px;color:#777;font-weight:400;">Domain: H</div>
<div class="t " style="left:539.30px;top:650px;line-height:14px;font-size:12.55px;color:#3676ba;font-weight:400;">Applicants Submission Unit Type</div>
<div class="t " style="left:539.30px;top:669px;line-height:11px;font-size:10.36px;color:#777;font-weight:400;">List Id: 100000155046 - Owner: EMA</div>
<div class="t " style="left:1217.50px;top:650px;line-height:14px;font-size:11.85px;color:#777;font-weight:400;">Mar 22, 2021</div>
<div class="t " style="left:1217.50px;top:669px;line-height:11px;font-size:10.34px;color:#777;font-weight:400;">Version: 21</div>
<svg class="r" style="left:1837px;top:654px;" width="14" height="14" viewBox="0 0 14 14"><path d="M1.2,1.9 C1.2,1.4 1.6,1 2.1,1 H6.9 L12.8,7.1 L6.9,13 L1.2,7.2 Z" fill="#777" stroke="#777" stroke-width="0.9" stroke-linejoin="round"/><circle cx="3.7" cy="3.7" r="1.1" fill="#fcfcfc"/></svg>
<div class="r" style="left:294px;top:704px;width:1566px;height:61px;background:#f2f2f2"></div>
<div class="r" style="left:299px;top:709px;width:39px;height:26px;box-sizing:border-box;background:#fff;border:1px solid #d9d9d9;border-radius:2px;box-shadow:0 1px 3px rgba(0,0,0,0.28)"></div>
<svg class="r" style="left:310px;top:712.2px;" width="20" height="20" viewBox="0 0 20 20"><g fill="#4a86be"><circle cx="10" cy="10" r="6.7"/><rect x="7.8" y="1.2" width="4.4" height="5" rx="0.6" transform="rotate(0 10 10)"/><rect x="7.8" y="1.2" width="4.4" height="5" rx="0.6" transform="rotate(60 10 10)"/><rect x="7.8" y="1.2" width="4.4" height="5" rx="0.6" transform="rotate(120 10 10)"/><rect x="7.8" y="1.2" width="4.4" height="5" rx="0.6" transform="rotate(180 10 10)"/><rect x="7.8" y="1.2" width="4.4" height="5" rx="0.6" transform="rotate(240 10 10)"/><rect x="7.8" y="1.2" width="4.4" height="5" rx="0.6" transform="rotate(300 10 10)"/></g><circle cx="10" cy="10" r="3" fill="#fff"/></svg>
<svg class="r" style="left:355px;top:712px;" width="20" height="19" viewBox="0 0 20 19"><path d="M10,2 L12.6,7.5 L18.5,8.3 L14,12.2 L15.2,18.1 L10,15.3 L4.8,18.1 L6,12.2 L1.5,8.3 L7.4,7.5 Z" fill="none" stroke="#f5c518" stroke-width="1.8" stroke-linejoin="round"/></svg>
<div class="r" style="left:383px;top:724px;width:1px;height:2px;background:#999"></div>
<div class="t " style="left:389.30px;top:711px;line-height:14px;font-size:12.3px;color:#6f6f6f;font-weight:400;">100000075859</div>
<div class="t " style="left:389.30px;top:730px;line-height:11px;font-size:10.2px;color:#777;font-weight:400;letter-spacing:-0.25px">Status: CURRENT</div>
<div class="t " style="left:389.30px;top:747px;line-height:11px;font-size:10.3px;color:#777;font-weight:400;">Domain: H</div>
<div class="t " style="left:539.30px;top:711px;line-height:14px;font-size:12.55px;color:#3676ba;font-weight:400;">Application Recipient</div>
<div class="t " style="left:539.30px;top:730px;line-height:11px;font-size:10.36px;color:#777;font-weight:400;">List Id: 100000075859 - Owner: EMA</div>
<div class="t " style="left:1217.50px;top:711px;line-height:14px;font-size:11.85px;color:#777;font-weight:400;">Feb 21, 2011</div>
<div class="t " style="left:1217.50px;top:730px;line-height:11px;font-size:10.34px;color:#777;font-weight:400;">Version: 2</div>
<svg class="r" style="left:1837px;top:715px;" width="14" height="14" viewBox="0 0 14 14"><path d="M1.2,1.9 C1.2,1.4 1.6,1 2.1,1 H6.9 L12.8,7.1 L6.9,13 L1.2,7.2 Z" fill="#777" stroke="#777" stroke-width="0.9" stroke-linejoin="round"/><circle cx="3.7" cy="3.7" r="1.1" fill="#fcfcfc"/></svg>
<div class="r" style="left:294px;top:765px;width:1566px;height:61px;background:#fcfcfc"></div>
<div class="r" style="left:299px;top:770px;width:39px;height:26px;box-sizing:border-box;background:#fff;border:1px solid #d9d9d9;border-radius:2px;box-shadow:0 1px 3px rgba(0,0,0,0.28)"></div>
<svg class="r" style="left:310px;top:773.2px;" width="20" height="20" viewBox="0 0 20 20"><g fill="#4a86be"><circle cx="10" cy="10" r="6.7"/><rect x="7.8" y="1.2" width="4.4" height="5" rx="0.6" transform="rotate(0 10 10)"/><rect x="7.8" y="1.2" width="4.4" height="5" rx="0.6" transform="rotate(60 10 10)"/><rect x="7.8" y="1.2" width="4.4" height="5" rx="0.6" transform="rotate(120 10 10)"/><rect x="7.8" y="1.2" width="4.4" height="5" rx="0.6" transform="rotate(180 10 10)"/><rect x="7.8" y="1.2" width="4.4" height="5" rx="0.6" transform="rotate(240 10 10)"/><rect x="7.8" y="1.2" width="4.4" height="5" rx="0.6" transform="rotate(300 10 10)"/></g><circle cx="10" cy="10" r="3" fill="#fff"/></svg>
<svg class="r" style="left:355px;top:773px;" width="20" height="19" viewBox="0 0 20 19"><path d="M10,2 L12.6,7.5 L18.5,8.3 L14,12.2 L15.2,18.1 L10,15.3 L4.8,18.1 L6,12.2 L1.5,8.3 L7.4,7.5 Z" fill="none" stroke="#f5c518" stroke-width="1.8" stroke-linejoin="round"/></svg>
<div class="r" style="left:383px;top:785px;width:1px;height:2px;background:#999"></div>
<div class="t " style="left:389.30px;top:772px;line-height:14px;font-size:12.3px;color:#6f6f6f;font-weight:400;">100000154440</div>
<div class="t " style="left:389.30px;top:791px;line-height:11px;font-size:10.2px;color:#777;font-weight:400;letter-spacing:-0.25px">Status: CURRENT</div>
<div class="t " style="left:389.30px;top:808px;line-height:11px;font-size:10.3px;color:#777;font-weight:400;">Domain: H</div>
<div class="t " style="left:539.30px;top:772px;line-height:14px;font-size:12.55px;color:#3676ba;font-weight:400;">Application Reference Reason</div>
<div class="t " style="left:539.30px;top:791px;line-height:11px;font-size:10.36px;color:#777;font-weight:400;">List Id: 100000154440 - Owner: EMA</div>
<div class="t " style="left:1217.50px;top:772px;line-height:14px;font-size:11.85px;color:#777;font-weight:400;">Apr 21, 2021</div>
<div class="t " style="left:1217.50px;top:791px;line-height:11px;font-size:10.34px;color:#777;font-weight:400;">Version: 4</div>
<svg class="r" style="left:1837px;top:776px;" width="14" height="14" viewBox="0 0 14 14"><path d="M1.2,1.9 C1.2,1.4 1.6,1 2.1,1 H6.9 L12.8,7.1 L6.9,13 L1.2,7.2 Z" fill="#777" stroke="#777" stroke-width="0.9" stroke-linejoin="round"/><circle cx="3.7" cy="3.7" r="1.1" fill="#fcfcfc"/></svg>
<div class="r" style="left:343px;top:277px;width:1px;height:549px;background:#d5d5d5"></div>
<div class="r" style="left:383px;top:277px;width:1px;height:549px;background:#d5d5d5"></div>
<div class="r" style="left:533px;top:277px;width:1px;height:549px;background:#d5d5d5"></div>
<div class="r" style="left:1061px;top:277px;width:1px;height:549px;background:#d5d5d5"></div>
<div class="r" style="left:1211px;top:277px;width:1px;height:549px;background:#d5d5d5"></div>
<div class="r" style="left:1331px;top:277px;width:1px;height:549px;background:#d5d5d5"></div>
<div class="r" style="left:1860px;top:277px;width:17px;height:549px;background:#f1f1f1"></div>
<div class="r" style="left:1862px;top:293px;width:13px;height:190px;background:#c1c1c1"></div>
<svg class="r" style="left:1864px;top:282px;" width="9" height="6" viewBox="0 0 9 6"><path d="M0.5,5 L4.5,1 L8.5,5 Z" fill="#a3a3a3"/></svg>
<svg class="r" style="left:1864px;top:815px;" width="9" height="6" viewBox="0 0 9 6"><path d="M0.5,1 L4.5,5 L8.5,1 Z" fill="#505050"/></svg>
<div class="r" style="left:294px;top:826px;width:1583px;height:43px;box-sizing:border-box;background:#fff;border-top:1px solid #eeeeee"></div>
<div class="r" style="left:304px;top:836px;width:37px;height:25px;box-sizing:border-box;background:#f6f6f6;border:1px solid #d8d8d8;border-radius:3px"></div>
<svg class="r" style="left:304px;top:836px;" width="37" height="25" viewBox="0 0 37 25"><rect x="12" y="7.5" width="1.6" height="10" fill="#777"/><path d="M24,7.5 V17.5 L15.5,12.5 Z" fill="#777"/></svg>
<div class="r" style="left:345px;top:836px;width:34px;height:25px;box-sizing:border-box;background:#f6f6f6;border:1px solid #d8d8d8;border-radius:3px"></div>
<svg class="r" style="left:345px;top:836px;" width="34" height="25" viewBox="0 0 34 25"><path d="M21,7.8 V17.2 L13,12.5 Z" fill="#777"/></svg>
<div class="r" style="left:383px;top:835px;width:50px;height:26px;box-sizing:border-box;background:#fff;border:1px solid #cfcfcf;border-radius:3px"></div>
<div class="t " style="left:395.50px;top:841px;line-height:15px;font-size:13px;color:#555;font-weight:400;">1</div>
<div class="t " style="left:437.70px;top:840px;line-height:16px;font-size:14.75px;color:#555;font-weight:400;">/ 3</div>
<div class="r" style="left:458px;top:836px;width:34px;height:25px;box-sizing:border-box;background:#f0f0f0;border:1px solid #d8d8d8;border-radius:3px"></div>
<svg class="r" style="left:458px;top:836px;" width="34" height="25" viewBox="0 0 34 25"><path d="M12.5,7.5 V17.5 L21,12.5 Z" fill="#333"/></svg>
<div class="r" style="left:496px;top:836px;width:34px;height:25px;box-sizing:border-box;background:#f0f0f0;border:1px solid #d8d8d8;border-radius:3px"></div>
<svg class="r" style="left:496px;top:836px;" width="34" height="25" viewBox="0 0 34 25"><path d="M11.5,7.5 V17.5 L19.5,12.5 Z" fill="#333"/><rect x="20.8" y="7.3" width="1.8" height="10.4" fill="#333"/></svg>
<div class="r" style="left:554px;top:835px;width:67px;height:25px;box-sizing:border-box;background:#fff;border:1px solid #cfcfcf;border-radius:3px;overflow:hidden"></div>
<div class="r" style="left:555px;top:836px;width:50px;height:18px;overflow:hidden"><div class="t" style="left:14px;top:9px;line-height:14px;font-size:13px;color:#555">50</div></div>
<svg class="r" style="left:606px;top:844px;" width="10" height="7" viewBox="0 0 10 7"><path d="M1,1.2 L5,5.2 L9,1.2" fill="none" stroke="#444" stroke-width="1.8"/></svg>
<div class="t " style="left:624.70px;top:838px;line-height:16px;font-size:14.6px;color:#555;font-weight:400;">items per page</div>
<div class="t " style="left:1747.00px;top:842px;line-height:16px;font-size:14.37px;color:#555;font-weight:400;">1 - 50 of 150 items</div>
<div class="t " style="left:288.00px;top:949px;line-height:12px;font-size:10.85px;color:#666;font-weight:400;">SPORIFY 21.3 Enterprise</div>
<svg class="r" style="left:1523px;top:944px;" width="16" height="16" viewBox="0 0 16 16"><circle cx="8" cy="8" r="7.9" fill="#4682bb"/><rect x="6.8" y="4" width="2.5" height="1.9" fill="#fff"/><path d="M5.9,7 H9.3 V11 H10.1 V12.2 H5.9 V11 H6.8 V8.2 H5.9 Z" fill="#fff"/></svg>
<div class="t " style="left:1542.20px;top:948px;line-height:12px;font-size:11.36px;color:#666;font-weight:400;">Current Timezone: (UTC+00:00) Dublin, Edinburgh, Lisbon, London</div>
</body></html>
